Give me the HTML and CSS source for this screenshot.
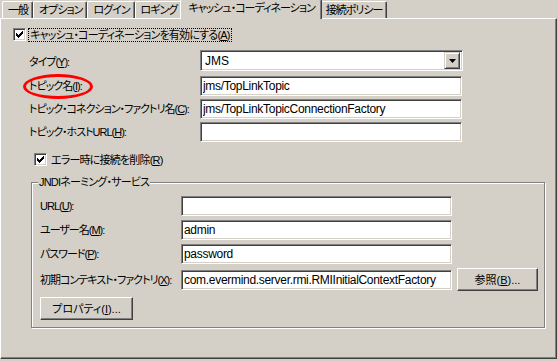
FILE: index.html
```html
<!DOCTYPE html>
<html lang="ja">
<head>
  <meta charset="UTF-8" />
  <title>キャッシュ・コーディネーション</title>
  <link rel="stylesheet" href="styles.css">
</head>
<body>
  <div class="tabs">
    <div class="tab">一般</div>
    <div class="tab">オプション</div>
    <div class="tab">ログイン</div>
    <div class="tab">ロギング</div>
    <div class="tab active">キャッシュ・コーディネーション</div>
    <div class="tab">接続ポリシー</div>
  </div>

  <div class="panel">
    <label class="check-row">
      <span class="checkbox checked"><svg viewBox="0 0 7 7" width="7" height="7"><path d="M0 2h1v1h1v1h1V3h1V2h1V1h1V0h1v3H6v1H5v1H4v1H3v1H2V6H1V5H0z" fill="#000"/></svg></span>
      <span class="focus">キャッシュ・コーディネーションを有効にする(<u>A</u>)</span>
    </label>

    <div class="fields">
      <span class="lbl">タイプ(<u>Y</u>):</span>
      <div class="combo">
        <span class="combo-text">JMS</span>
        <span class="combo-btn"><svg viewBox="0 0 7 4" width="7" height="4"><path d="M0 0h7L3.5 4z" fill="#000"/></svg></span>
      </div>

      <span class="lbl"><span class="marked">トピック名(<u>I</u>):</span></span>
      <input class="field" type="text" value="jms/TopLinkTopic">

      <span class="lbl">トピック・コネクション・ファクトリ名(<u>C</u>):</span>
      <input class="field" type="text" value="jms/TopLinkTopicConnectionFactory">

      <span class="lbl">トピック・ホストURL(<u>H</u>):</span>
      <input class="field" type="text" value="">
    </div>

    <label class="check-row sub">
      <span class="checkbox checked"><svg viewBox="0 0 7 7" width="7" height="7"><path d="M0 2h1v1h1v1h1V3h1V2h1V1h1V0h1v3H6v1H5v1H4v1H3v1H2V6H1V5H0z" fill="#000"/></svg></span>
      <span>エラー時に接続を削除(<u>R</u>)</span>
    </label>

    <fieldset class="group">
      <legend>JNDIネーミング・サービス</legend>
      <div class="group-fields">
        <span class="lbl">URL(<u>U</u>):</span>
        <input class="field" type="text" value="">
        <span></span>

        <span class="lbl">ユーザー名(<u>M</u>):</span>
        <input class="field" type="text" value="admin">
        <span></span>

        <span class="lbl">パスワード(<u>P</u>):</span>
        <input class="field" type="text" value="password">
        <span></span>

        <span class="lbl">初期コンテキスト・ファクトリ(<u>X</u>):</span>
        <input class="field" type="text" value="com.evermind.server.rmi.RMIInitialContextFactory">
        <button class="btn">参照(<u>B</u>)...</button>
      </div>
      <button class="btn props">プロパティ(<u>I</u>)...</button>
    </fieldset>
  </div>
</body>
</html>
```

FILE: styles.css
```css
body {
  margin: 0;
  width: 558px;
  height: 361px;
  background: #d4d0c8;
  font: 11px/14px "Liberation Sans", "Noto Sans CJK JP", sans-serif;
  font-feature-settings: "palt";
  letter-spacing: -0.8px;
  color: #000;
  overflow: hidden;
}
u {
  text-decoration: underline;
}

/* tab strip */
.tabs {
  display: flex;
  align-items: flex-end;
  height: 18px;
  padding-left: 2px;
}
.tab {
  height: 16px;
  line-height: 16px;
  padding: 0 4px 0 5px;
  letter-spacing: -1px;
  border-top: 1px solid #fff;
  border-left: 1px solid #fff;
  border-right: 1px solid #404040;
  box-shadow: inset -1px 0 #808080;
  border-radius: 2px 2px 0 0;
  white-space: nowrap;
}
.tab.active {
  position: relative;
  z-index: 1;
  height: 19px;
  line-height: 17px;
  margin: 0 -2px -1px;
  padding: 0 6px 0 7px;
  background: #d4d0c8;
}

/* tab page */
.panel {
  box-sizing: border-box;
  width: 557px;
  height: 341px;
  border: 1px solid;
  border-color: #fff #404040 #404040 #fff;
  box-shadow: inset -1px -1px #808080;
  padding: 8px 0 0 12px;
}

.check-row {
  display: flex;
  align-items: center;
  gap: 2px;
  height: 15px;
}
.check-row.sub {
  margin: 10px 0 0 21px;
  gap: 4px;
}
.checkbox {
  box-sizing: border-box;
  width: 13px;
  height: 13px;
  background: #fff;
  border: 1px solid;
  border-color: #808080 #fff #fff #808080;
  box-shadow: inset 1px 1px #404040, inset -1px -1px #d4d0c8;
  display: flex;
  align-items: center;
  justify-content: center;
}
.focus {
  border: 1px dotted #000;
  padding: 0 1px;
  line-height: 12px;
}

.fields {
  display: grid;
  grid-template-columns: 171px 263px;
  row-gap: 3px;
  align-items: center;
  margin: 8px 0 0 16px;
}
.lbl {
  white-space: nowrap;
  letter-spacing: -1px;
}
.marked {
  position: relative;
}
.marked::after {
  content: "";
  position: absolute;
  left: -6px;
  top: -6px;
  width: 64px;
  height: 19px;
  border: 3px solid #f00;
  border-radius: 50%;
}

.field {
  box-sizing: border-box;
  width: 262px;
  height: 20px;
  margin: 0;
  padding: 0 2px;
  font: 12px "Liberation Sans", sans-serif;
  letter-spacing: -0.3px;
  background: #fff;
  border: 1px solid;
  border-color: #808080 #fff #fff #808080;
  box-shadow: inset 1px 1px #404040, inset -1px -1px #d4d0c8;
  outline: none;
}

.combo {
  box-sizing: border-box;
  height: 21px;
  margin-bottom: 2px;
  display: flex;
  align-items: center;
  justify-content: space-between;
  background: #fff;
  border: 1px solid;
  border-color: #808080 #fff #fff #808080;
  box-shadow: inset 1px 1px #404040, inset -1px -1px #d4d0c8;
  padding: 2px 2px 2px 4px;
  font-size: 12px;
  letter-spacing: 0;
}
.combo-btn {
  box-sizing: border-box;
  width: 16px;
  height: 17px;
  background: #d4d0c8;
  border: 1px solid;
  border-color: #d4d0c8 #404040 #404040 #d4d0c8;
  box-shadow: inset 1px 1px #fff, inset -1px -1px #808080;
  display: flex;
  align-items: center;
  justify-content: center;
}

/* JNDI group box */
.group {
  box-sizing: border-box;
  width: 514px;
  margin: 8px 0 0 18px;
  padding: 7px 0 7px 8px;
  border: 1px solid #808080;
  box-shadow: inset 1px 1px #fff, 1px 1px #fff;
}
.group legend {
  margin-left: -2px;
  padding: 0 1px;
  background: #d4d0c8;
  line-height: 14px;
}
.group-fields {
  display: grid;
  grid-template-columns: 141px 276px 81px;
  row-gap: 4px;
  align-items: center;
}
.group-fields .field {
  width: 271px;
}

.btn {
  box-sizing: border-box;
  height: 23px;
  margin: 0;
  padding: 0;
  font: inherit;
  background: #d4d0c8;
  border: 1px solid;
  border-color: #fff #404040 #404040 #fff;
  box-shadow: inset -1px -1px #808080;
}
.props {
  width: 93px;
  margin-top: 6px;
}
```
